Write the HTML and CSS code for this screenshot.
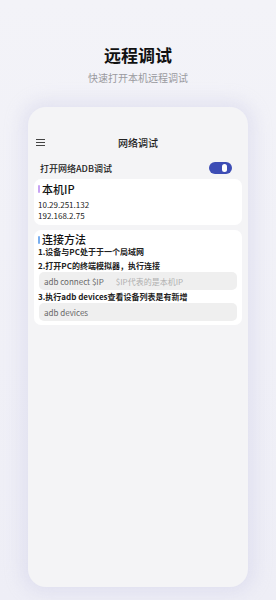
FILE: index.html
```
<!DOCTYPE html>
<html lang="zh">
<head>
    <meta charset="UTF-8">
    <title>远程调试</title>
    <link rel="stylesheet" href="styles.css">
</head>
<body>
    <div class="title">远程调试</div>
    <div class="subtitle">快速打开本机远程调试</div>

    <div class="phone">
        <div class="topbar">
            <span class="menu"><i></i><i></i><i></i></span>
            <span class="topbar-title">网络调试</span>
        </div>

        <div class="switch-row">
            <span>打开网络ADB调试</span>
            <span class="switch"><i></i></span>
        </div>

        <div class="card">
            <div class="card-title"><span class="bar purple"></span>本机IP</div>
            <div class="ip first">10.29.251.132</div>
            <div class="ip">192.168.2.75</div>
        </div>

        <div class="card">
            <div class="card-title small"><span class="bar blue"></span>连接方法</div>
            <div class="step first">1.设备与PC处于于一个局域网</div>
            <div class="step">2.打开PC的终端模拟器，执行连接</div>
            <div class="code">adb connect $IP<span class="hint">$IP代表的是本机IP</span></div>
            <div class="step">3.执行adb devices查看设备列表是有新增</div>
            <div class="code">adb devices</div>
        </div>
    </div>
</body>
</html>
```

FILE: styles.css
```
body, html {
    margin: 0;
    padding: 0;
}

body {
    background: linear-gradient(#f3f3f8, #eeeef6);
    font-family: "Noto Sans CJK SC", "Noto Sans", sans-serif;
    color: #1a1a1a;
    height: 600px;
    overflow: hidden;
    padding-top: 43px;
    box-sizing: border-box;
}

.title {
    text-align: center;
    font-size: 17px;
    font-weight: bold;
    line-height: 24px;
    color: #111;
}

.subtitle {
    text-align: center;
    font-size: 10px;
    line-height: 14px;
    margin-top: 4px;
    color: #9a9a9f;
}

/* 폰 화면 */
.phone {
    width: 220px;
    height: 480px;
    margin: 22px auto 0;
    background-color: #f4f4f6;
    border-radius: 18px;
    box-shadow: 0 0 16px 7px rgba(200, 200, 230, 0.35);
    padding: 28px 6px 0;
    box-sizing: border-box;
}

.topbar {
    display: flex;
    align-items: center;
    justify-content: center;
    height: 14px;
    position: relative;
}

.menu {
    position: absolute;
    left: 2px;
    top: 4px;
    width: 9px;
    display: flex;
    flex-direction: column;
    gap: 2px;
}

.menu i {
    display: block;
    height: 1px;
    background-color: #444;
}

.topbar-title {
    font-size: 10px;
    font-weight: 500;
    color: #222;
}

.switch-row {
    display: flex;
    align-items: center;
    justify-content: space-between;
    height: 16px;
    margin-top: 11px;
    padding: 0 10px 0 6px;
    font-size: 9px;
    font-weight: 500;
    color: #222;
}

.switch {
    width: 23px;
    height: 12px;
    border-radius: 6px;
    background-color: #3d4db5;
    display: flex;
    align-items: center;
    justify-content: flex-end;
    padding-right: 5px;
    box-sizing: border-box;
}

.switch i {
    display: block;
    width: 5px;
    height: 8px;
    border-radius: 3px;
    background-color: #fff;
}

.card {
    background-color: #fff;
    border-radius: 7px;
    padding: 3px 4px 4px;
    margin-top: 3px;
}

.card + .card {
    margin-top: 5px;
}

.card-title {
    display: flex;
    align-items: center;
    font-size: 11px;
    line-height: 14px;
    font-weight: 500;
    color: #111;
}

.card-title.small {
    line-height: 13px;
}

.bar {
    width: 2px;
    height: 8px;
    border-radius: 1px;
    margin-right: 2px;
}

.purple {
    background-color: #c7a3f3;
}

.blue {
    background-color: #78aef0;
}

.ip {
    font-size: 8px;
    line-height: 11px;
    color: #222;
}

.ip.first {
    margin-top: 3px;
}

.step {
    font-size: 8px;
    line-height: 13px;
    font-weight: bold;
    color: #222;
}

.step.first {
    line-height: 12px;
}

.step.first + .step {
    margin-top: 1px;
}

.code {
    height: 18px;
    margin: 0 1px;
    border-radius: 5px;
    background-color: #efefef;
    display: flex;
    align-items: center;
    padding: 0 5px;
    font-size: 8px;
    color: #666;
}

.hint {
    margin-left: 12px;
    color: #b0b0b0;
}
```
